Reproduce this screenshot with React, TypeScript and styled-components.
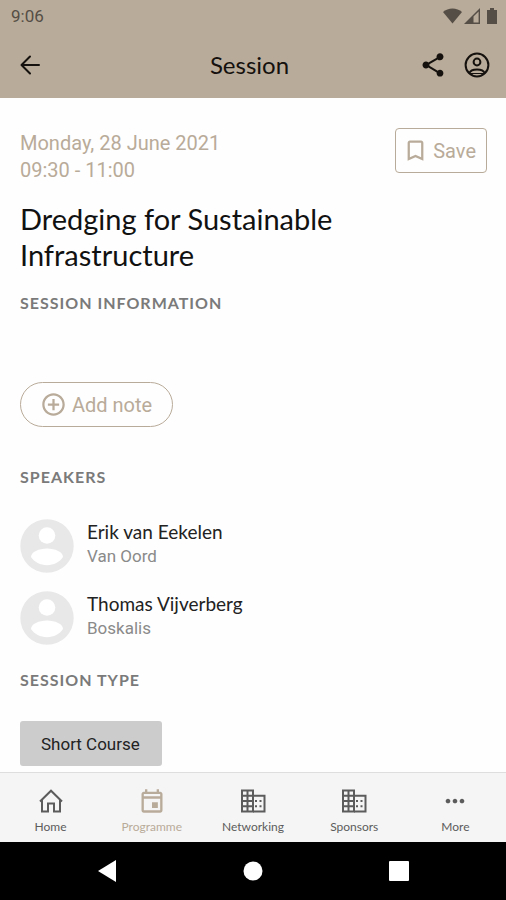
import React from "react";
import styled, { createGlobalStyle } from "styled-components";

const tan = "#b9ab99";
const display = 'Lato, "Open Sans", sans-serif';
const body = 'Roboto, "Noto Sans", sans-serif';

const GlobalStyle = createGlobalStyle`
  *, *::before, *::after { box-sizing: border-box; }
  body { margin: 0; background: #fefefe; font-family: ${body}; }
  button { font: inherit; color: inherit; background: none; border: 0; padding: 0; cursor: pointer; }
  h1, h2, p, ul { margin: 0; padding: 0; font-weight: 400; }
  svg { display: block; flex: none; }
`;

const Screen = styled.div`
  min-height: 100vh;
  display: flex;
  flex-direction: column;
`;

const Header = styled.header`
  background: ${tan};
  color: #14110e;
`;

const StatusBar = styled.div`
  display: flex;
  justify-content: space-between;
  align-items: center;
  height: 32px;
  padding: 0 6px 0 11px;
  color: #554e46;
  font-size: 17px;
`;

const StatusIcons = styled.div`
  display: flex;
  align-items: center;
  gap: 2px;
`;

const TitleBar = styled.div`
  display: grid;
  grid-template-columns: 1fr auto 1fr;
  align-items: center;
  height: 66px;
  padding: 0 15px 0 16px;
`;

const Title = styled.h1`
  padding-right: 8px;
  font-family: ${display};
  font-size: 24px;
  line-height: 30px;
`;

const Actions = styled.div`
  display: flex;
  justify-content: flex-end;
  gap: 16px;
`;

const IconButton = styled.button`
  width: 28px;
  height: 28px;
`;

const Main = styled.main`
  flex: 1;
  padding: 30px 19px 6px 20px;
`;

const Summary = styled.div`
  display: flex;
  justify-content: space-between;
  align-items: flex-start;
`;

const When = styled.p`
  padding-top: 2px;
  color: ${tan};
  font-size: 20px;
  line-height: 27px;
`;

const OutlineButton = styled.button<{ $pill?: boolean }>`
  display: flex;
  align-items: center;
  gap: ${(p) => (p.$pill ? 5 : 4)}px;
  height: 45px;
  padding: ${(p) => (p.$pill ? "0 20px 0 19px" : "0 10px 0 6px")};
  border: 1px solid ${tan};
  border-radius: ${(p) => (p.$pill ? 23 : 4)}px;
  color: ${tan};
  font-size: 20px;
`;

const SessionName = styled.h2`
  margin-top: 17px;
  max-width: 360px;
  font-family: ${display};
  font-size: 29px;
  line-height: 36px;
  color: #111;
`;

const SectionTitle = styled.h2<{ $top: number }>`
  margin-top: ${(p) => p.$top}px;
  font-family: ${display};
  font-size: 16px;
  font-weight: 700;
  line-height: 20px;
  letter-spacing: 1px;
  color: #7a7a7a;
`;

const NoteArea = styled.div`
  display: flex;
  margin-top: 69px;
`;

const Speakers = styled.ul`
  display: grid;
  gap: 18px;
  margin-top: 32px;
  list-style: none;
`;

const Speaker = styled.li`
  display: flex;
  align-items: center;
  gap: 13px;
`;

const SpeakerText = styled.div`
  padding-bottom: 4px;
`;

const SpeakerName = styled.p`
  font-family: ${display};
  font-size: 19px;
  line-height: 24px;
  color: #222;
`;

const Company = styled.p`
  font-size: 17px;
  line-height: 24px;
  color: #8a8a8a;
`;

const Tag = styled.button`
  height: 45px;
  margin-top: 31px;
  padding: 0 22px 0 21px;
  border-radius: 3px;
  background: #cccccc;
  color: #222;
  font-size: 17px;
`;

const Tabs = styled.nav`
  display: grid;
  grid-template-columns: repeat(5, 1fr);
  height: 70px;
  border-top: 1px solid #dedede;
  background: #f5f5f5;
`;

const Tab = styled.a<{ $active?: boolean }>`
  display: flex;
  flex-direction: column;
  align-items: center;
  gap: 3px;
  padding-top: 14px;
  color: ${(p) => (p.$active ? tan : "#5c5c5c")};
  font-family: ${display};
  font-size: 12px;
  line-height: 17px;
  text-decoration: none;
`;

const SystemBar = styled.div`
  display: grid;
  grid-template-columns: repeat(3, 146px);
  justify-content: center;
  justify-items: center;
  align-items: center;
  height: 58px;
  background: #000;
  color: #fff;
`;

const SystemButton = styled.button`
  color: #fff;
`;

function Glyph({ d, size = 28 }: { d: string; size?: number }) {
  return (
    <svg width={size} height={size} viewBox="0 0 24 24" fill="currentColor" aria-hidden="true">
      <path fillRule="evenodd" d={d} />
    </svg>
  );
}

function BackArrow() {
  return (
    <svg width="28" height="28" viewBox="0 0 28 28" fill="none" stroke="currentColor" strokeWidth="2" strokeLinecap="round" strokeLinejoin="round" aria-hidden="true">
      <path d="M23 14H6M14 5.500 5.500 14l8.500 8.500" />
    </svg>
  );
}

const share =
  "M18 16.080c-.76 0-1.440.3-1.960.77L8.910 12.700c.05-.23.09-.46.09-.7s-.04-.47-.09-.7l7.050-4.110c.54.5 1.250.81 2.040.81 1.660 0 3-1.340 3-3s-1.340-3-3-3-3 1.340-3 3c0 .24.04.47.09.7L8.040 9.810C7.500 9.310 6.790 9 6 9c-1.660 0-3 1.340-3 3s1.340 3 3 3c.79 0 1.500-.31 2.040-.81l7.120 4.160c-.05.21-.08.43-.08.65 0 1.610 1.310 2.920 2.920 2.920s2.920-1.310 2.920-2.920-1.310-2.920-2.920-2.920z";
const bookmark =
  "M17 3H7c-1.100 0-2 .9-2 2v16l7-3 7 3V5c0-1.100-.9-2-2-2zm0 15-5-2.180L7 18V5h10v13z";
const addCircle =
  "M13 7h-2v4H7v2h4v4h2v-4h4v-2h-4V7zm-1-5C6.480 2 2 6.480 2 12s4.480 10 10 10 10-4.480 10-10S17.520 2 12 2zm0 18c-4.410 0-8-3.590-8-8s3.590-8 8-8 8 3.590 8 8-3.590 8-8 8z";
const calendar =
  "M19 4h-1V2h-2v2H8V2H6v2H5c-1.110 0-1.990.9-1.990 2L3 20c0 1.100.89 2 2 2h14c1.100 0 2-.9 2-2V6c0-1.100-.9-2-2-2zm0 16H5V10h14v10zm0-12H5V6h14v2zm-7 5h5v5h-5z";
const more =
  "M6 10c-1.100 0-2 .9-2 2s.9 2 2 2 2-.9 2-2-.9-2-2-2zm12 0c-1.100 0-2 .9-2 2s.9 2 2 2 2-.9 2-2-.9-2-2-2zm-6 0c-1.100 0-2 .9-2 2s.9 2 2 2 2-.9 2-2-.9-2-2-2z";

function Home() {
  return (
    <svg width="28" height="28" viewBox="0 0 28 28" fill="none" stroke="currentColor" strokeWidth="2" aria-hidden="true">
      <path d="M3 14.500 14 3.700l11 10.800M5 13v11.500h6V16.500h6v8h6V13" />
    </svg>
  );
}

function Account() {
  return (
    <svg width="28" height="28" viewBox="0 0 28 28" fill="none" stroke="currentColor" strokeWidth="2" aria-hidden="true">
      <circle cx="14" cy="14" r="11.400" />
      <circle cx="14" cy="11" r="3.400" />
      <path d="M6.300 22c1-2.600 4.400-3.600 7.700-3.600s6.700 1 7.700 3.600" />
      <path d="M8 22.500h12" strokeWidth="1" />
    </svg>
  );
}

function Building() {
  return (
    <svg width="28" height="28" viewBox="0 0 28 28" fill="none" stroke="currentColor" aria-hidden="true">
      <path strokeWidth="2" d="M3 3.500h11v21H3zM8.500 3v22M2 8.800h12M2 14h12M2 19.300h12" />
      <path strokeWidth="2" d="M14 8.800h11.500v15.700H14" />
      <path strokeWidth="2" d="M16 14h2M20.500 14h2M16 19.300h2M20.500 19.300h2" />
    </svg>
  );
}

function Avatar() {
  return (
    <svg width="54" height="54" viewBox="0 0 54 54" role="img" aria-label="Speaker portrait">
      <circle cx="27" cy="27" r="26.700" fill="#e8e8e8" />
      <circle cx="27" cy="16.500" r="8.300" fill="#fff" />
      <path d="M11 38c0-5 8-8.500 16-8.500S43 33 43 38c-3.300 5-9.300 8.200-16 8.200S14.300 43 11 38z" fill="#fff" />
    </svg>
  );
}

const speakers = [
  { name: "Erik van Eekelen", company: "Van Oord" },
  { name: "Thomas Vijverberg", company: "Boskalis" },
];

const tabs = [
  { label: "Home", icon: <Home /> },
  { label: "Programme", icon: <Glyph d={calendar} />, active: true },
  { label: "Networking", icon: <Building /> },
  { label: "Sponsors", icon: <Building /> },
  { label: "More", icon: <Glyph d={more} /> },
];

export default function App() {
  return (
    <Screen>
      <GlobalStyle />
      <Header>
        <StatusBar>
          <span>9:06</span>
          <StatusIcons>
            <svg width="19" height="16" viewBox="0 0 19 16" fill="currentColor" aria-label="Wi-Fi">
              <path d="M0 4C5-.7 14-.7 19 4L9.500 15.500z" />
            </svg>
            <svg width="16" height="16" viewBox="0 0 16 16" fill="currentColor" aria-label="Signal">
              <path fillRule="evenodd" d="M0 16 16 0v16zM9.500 14.600h5.100V3.400L9.500 8.500z" />
            </svg>
            <svg width="18" height="16" viewBox="0 0 18 16" fill="currentColor" aria-label="Battery">
              <path d="M5 2h3V0h4v2h3v14H5z" />
            </svg>
          </StatusIcons>
        </StatusBar>
        <TitleBar>
          <IconButton aria-label="Back"><BackArrow /></IconButton>
          <Title>Session</Title>
          <Actions>
            <IconButton aria-label="Share"><Glyph d={share} /></IconButton>
            <IconButton aria-label="Account"><Account /></IconButton>
          </Actions>
        </TitleBar>
      </Header>

      <Main>
        <Summary>
          <When>Monday, 28 June 2021<br />09:30 - 11:00</When>
          <OutlineButton><Glyph d={bookmark} size={27} />Save</OutlineButton>
        </Summary>
        <SessionName>Dredging for Sustainable Infrastructure</SessionName>
        <SectionTitle $top={20}>SESSION INFORMATION</SectionTitle>
        <NoteArea>
          <OutlineButton $pill><Glyph d={addCircle} size={27} />Add note</OutlineButton>
        </NoteArea>
        <SectionTitle $top={40}>SPEAKERS</SectionTitle>
        <Speakers>
          {speakers.map((s) => (
            <Speaker key={s.name}>
              <Avatar />
              <SpeakerText>
                <SpeakerName>{s.name}</SpeakerName>
                <Company>{s.company}</Company>
              </SpeakerText>
            </Speaker>
          ))}
        </Speakers>
        <SectionTitle $top={25}>SESSION TYPE</SectionTitle>
        <Tag>Short Course</Tag>
      </Main>

      <Tabs aria-label="Main">
        {tabs.map((t) => (
          <Tab key={t.label} href="#" $active={t.active} aria-current={t.active ? "page" : undefined}>
            {t.icon}
            {t.label}
          </Tab>
        ))}
      </Tabs>
      <SystemBar>
        <SystemButton aria-label="System back">
          <svg width="20" height="22" viewBox="0 0 20 22" fill="currentColor"><path d="M19 0v22L1 11z" /></svg>
        </SystemButton>
        <SystemButton aria-label="System home">
          <svg width="20" height="20" viewBox="0 0 20 20" fill="currentColor"><circle cx="10" cy="10" r="9.500" /></svg>
        </SystemButton>
        <SystemButton aria-label="Recent apps">
          <svg width="20" height="20" viewBox="0 0 20 20" fill="currentColor"><rect width="20" height="20" rx="1" /></svg>
        </SystemButton>
      </SystemBar>
    </Screen>
  );
}
